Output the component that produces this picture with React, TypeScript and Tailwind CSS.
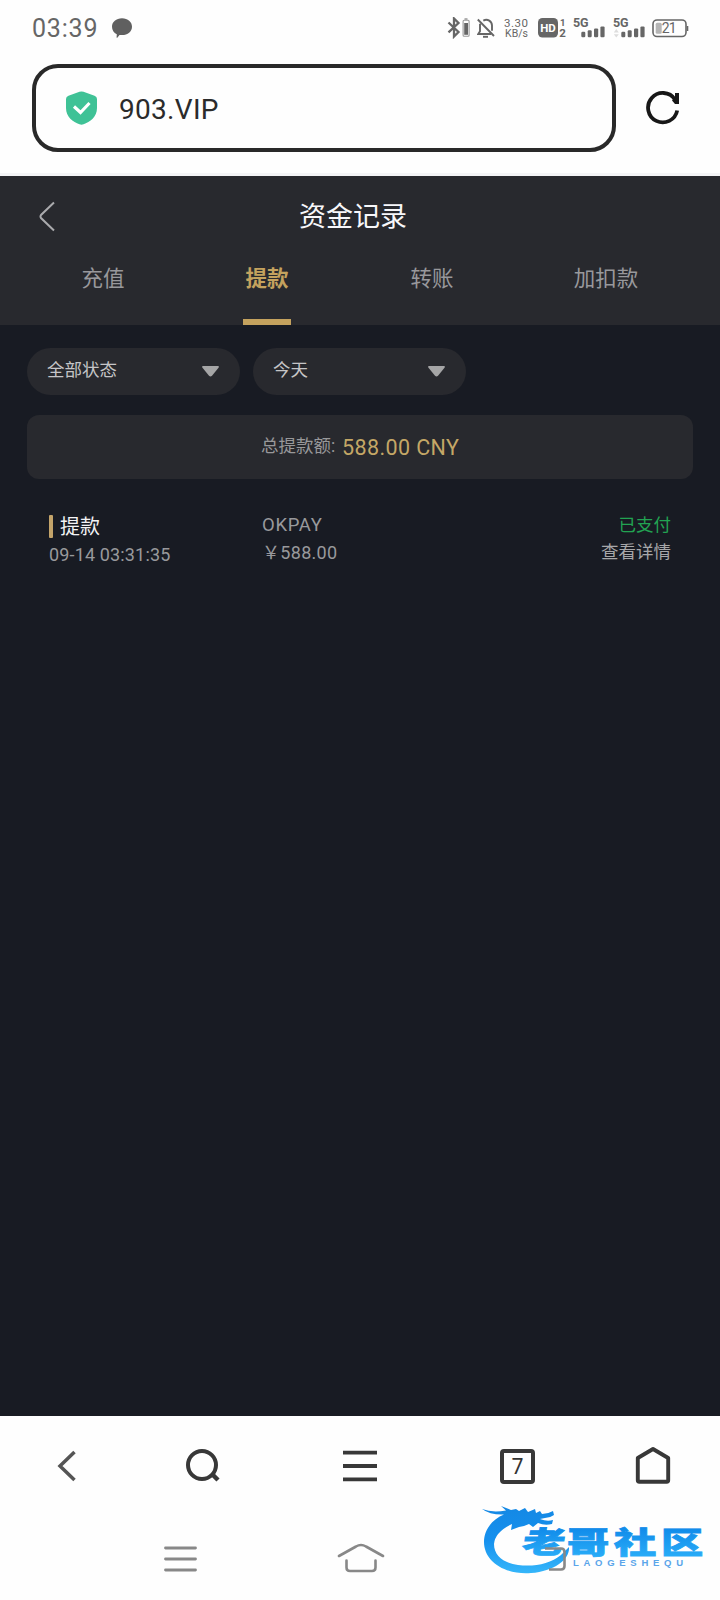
import type { ReactNode } from 'react';

const latin = "font-['Roboto','Noto_Sans_CJK_SC',sans-serif]";

function SignalBars({ second = false }: { second?: boolean }) {
  return (
    <svg className="overflow-visible" width="32" height="22" viewBox="0 0 32 22" fill="#666">
      <text x="0" y="10" fontSize="12.500" fontWeight="700" fontFamily="Roboto, sans-serif" textLength="15.500">5G</text>
      {second && <path d="M0.8 15.5 3.3 12l2.5 3.5zM0.8 17.3h5L3.3 20.6z" fill="#ddd" />}
      <rect x="8.3" y="14.800" width="4" height="5.500" rx="1.200" />
      <rect x="14.700" y="13.300" width="4" height="7" rx="1.200" />
      <rect x="21" y="11.400" width="4.200" height="8.900" rx="1.200" />
      <rect x="27.400" y="9.400" width="4.200" height="10.900" rx="1.200" />
    </svg>
  );
}

function StatusBar() {
  return (
    <div className="flex h-14 items-center pl-[32px] text-[#666]">
      <span className="w-[68px] whitespace-nowrap text-[25px] leading-none tracking-[0.8px]">03:39</span>
      <svg className="ml-3" width="20" height="20" viewBox="0 0 20 20" fill="#606060">
        <path d="M10 .3c5.800 0 10 3.700 10 8.400s-4.200 8.400-10 8.400c-1 0-1.800 0-2.500-.2L5.300 19.700c-.4.3-.8 0-.7-.5l.2-3C1.800 14.700 0 11.900 0 8.700 0 4 4.200.3 10 .3z" />
      </svg>
      <svg className="ml-[315px] shrink-0" width="24" height="22" viewBox="0 0 24 22" fill="none" stroke="#666" strokeWidth="2.300">
        <path d="M1.500 5.500 11.500 15 7 19.500V1.500L11.500 6 1.500 15.300" />
        <rect x="16.100" y="3.300" width="6" height="16" rx="1" stroke="#999" strokeWidth="1.100" />
        <path d="M17.500 2h3" stroke="#999" strokeWidth="1.500" />
        <path d="M19.100 6v11.800" strokeWidth="3.800" />
      </svg>
      <svg className="ml-[6px] shrink-0" width="18" height="22" viewBox="0 0 18 22" fill="none" stroke="#666" strokeWidth="1.900">
        <path d="M.8 2.500 17 19M3 6.700v7.600L1.300 17H14M6.300 3.600C10.500 1.400 15 4.200 15 8.500v5.300" />
        <path d="M6 19.800h5" />
      </svg>
      <svg className="ml-[8px] shrink-0" width="26" height="22" viewBox="0 0 26 22" fill="#666" fontFamily="Roboto, sans-serif">
        <text x="1" y="9.800" fontSize="11.500" textLength="24">3.30</text>
        <text x="2" y="20.300" fontSize="10.500" textLength="23">KB/s</text>
      </svg>
      <svg className="ml-[9px] shrink-0" width="29" height="22" viewBox="0 0 29 22" fontFamily="Roboto, sans-serif" fontWeight="700">
        <rect x="0" y="1" width="20" height="19.500" rx="4.500" fill="#666" />
        <text x="2.300" y="15" fontSize="11.500" fill="#fff" textLength="15.500">HD</text>
        <text x="22" y="8.500" fontSize="9.500" fill="#666">1</text>
        <text x="21.300" y="20" fontSize="11.500" fill="#666">2</text>
      </svg>
      <div className="ml-[6px] shrink-0"><SignalBars /></div>
      <div className="ml-[8px] shrink-0"><SignalBars second /></div>
      <svg className="ml-[7px] shrink-0" width="38" height="20" viewBox="0 0 38 20">
        <rect x="1" y="2" width="33" height="16.500" rx="4" fill="none" stroke="#666" strokeWidth="1.600" />
        <path d="M35.500 8v5" stroke="#666" strokeWidth="1.600" />
        <rect x="3.700" y="4.800" width="6" height="11" rx="1.500" fill="#b5b5b5" />
        <text x="9.700" y="15.300" fontSize="14" fill="#666" fontFamily="Roboto, sans-serif" textLength="15">21</text>
      </svg>
    </div>
  );
}

function AddressBar() {
  return (
    <div className="flex h-[120px] items-start border-b-[3px] border-[#f4f4f6] pt-2 pl-8">
      <div className="flex h-[88px] w-[584px] items-center rounded-[26px] border-4 border-[#292929] pl-[30px]">
        <svg width="31" height="34" viewBox="0 0 31 34">
          <path d="M13.500.8q2-.8 4 0l11 4Q31 5.800 31 8v9c0 9-7 14-13.500 16.300q-2 .7-4 0C7 31 0 26 0 17V8q0-2.200 2.500-3.200z" fill="#3fc296" />
          <path d="m8 15.500 6.500 6 9-9.500" fill="none" stroke="#fff" strokeWidth="3.100" />
        </svg>
        <span className="ml-[22px] translate-y-[2px] text-[28px] leading-none tracking-[0.3px] text-[#2b2b2b]">903.VIP</span>
      </div>
      <svg className="mt-[27px] ml-[30px]" width="34" height="34" viewBox="0 0 34 34" fill="none" stroke="#171717" strokeWidth="3.800">
        <path d="M31.200 19.500A14.700 14.700 0 1 1 29 8.500" />
        <path d="M29 2h4V13h-4L26 9.500 29 6z" fill="#171717" stroke="none" />
      </svg>
    </div>
  );
}

const tabs = [
  { label: '充值', place: 'ml-[79px] w-12' },
  { label: '提款', place: 'ml-[116px] w-12', active: true },
  { label: '转账', place: 'ml-[117px] w-12' },
  { label: '加扣款', place: 'ml-[115px] w-[70px]' },
];

function RecordHeader() {
  return (
    <header className="h-[149px] bg-[#28292e]">
      <div className="flex h-[80px] items-center pl-[39px]">
        <svg width="16" height="31" viewBox="0 0 16 31" fill="none" stroke="#aaaaad" strokeWidth="2">
          <path d="M15 1.500 2 14q-1 1.500 0 3l13 12.500" />
        </svg>
        <h1 className="ml-[244px] translate-y-[1px] text-[27px] leading-none text-[#f7f7fa]">资金记录</h1>
      </div>
      <nav className="flex h-[69px]">
        {tabs.map((t) => (
          <div key={t.label} className={`${t.place} flex flex-col items-center justify-between whitespace-nowrap text-[21.500px] leading-[46px] ${t.active ? 'font-bold text-[#c4a25e]' : 'text-[#98989c]'}`}>
            <span>{t.label}</span>
            {t.active && <i className="h-[6px] w-12 bg-[#c4a25e]" />}
          </div>
        ))}
      </nav>
    </header>
  );
}

function Filter({ children }: { children: ReactNode }) {
  return (
    <div className="flex h-[47px] w-[213px] items-center justify-between rounded-full bg-[#28292e] pr-[21px] pl-[20px] text-[17.500px] leading-none text-[#c5c5c7]">
      <span className="-translate-y-[1px]">{children}</span>
      <svg width="17" height="11" viewBox="0 0 17 11" fill="#a5a5a6">
        <path d="M1 0h15q1.500.3.500 1.700L10 9.800q-1.500 1.600-3 0L.5 1.700Q-.5.300 1 0z" />
      </svg>
    </div>
  );
}

function Records() {
  return (
    <main className="h-[1091px] bg-[#181b23] px-[27px] pt-[23px]">
      <div className="flex gap-[13px]">
        <Filter>全部状态</Filter>
        <Filter>今天</Filter>
      </div>
      <div className="mt-5 flex h-16 items-center rounded-xl bg-[#28292e] pl-[234px] leading-none text-[#98989a]">
        <span className="w-[81px] text-[17.500px]">总提款额:</span>
        <span className="translate-y-[1px] text-[21.500px] tracking-[0.4px] text-[#c4a766]">588.00 CNY</span>
      </div>
      <div className="flex pt-[33px] pr-[22px] pl-[22px] text-[17.500px] leading-[27px] text-[#98999c]">
        <div className="w-[213px] pt-[1px]">
          <div className="flex items-center gap-[7px] text-[20px] text-[#f3f3f5]">
            <i className="h-[23px] w-1 rounded-[1px] bg-[#c3a46a]" />
            <span className="translate-y-[1px]">提款</span>
          </div>
          <div className="translate-y-[1px] text-[18px] tracking-[0.150px]">09-14 03:31:35</div>
        </div>
        <div className="flex-1">
          <div className="text-[18.500px] tracking-[0.7px]">OKPAY</div>
          <div className="text-[18px] tracking-[0.3px]">￥588.00</div>
        </div>
        <div className="text-right">
          <div className="text-[#22a352]">已支付</div>
          <div className="text-[#a7a7a9]">查看详情</div>
        </div>
      </div>
    </main>
  );
}

function BrowserToolbar() {
  return (
    <div className="flex h-[98px] items-center pt-[2px]">
      <svg className="ml-[57px]" width="20" height="32" viewBox="0 0 20 32" fill="none" stroke="#555" strokeWidth="3.500">
        <path d="M17.500 2 3 16l14.500 14" />
      </svg>
      <svg className="ml-[108px]" width="36" height="34" viewBox="0 0 36 34" fill="none" stroke="#383838" strokeWidth="4">
        <circle cx="17" cy="16" r="14" />
        <path d="m27 25 6 6" strokeWidth="4.500" />
      </svg>
      <svg className="ml-[122px]" width="34" height="32" viewBox="0 0 34 32" stroke="#383838" strokeWidth="3.800">
        <path d="M0 2.700h34M0 16h34M0 29.300h34" />
      </svg>
      <div className="ml-[123px] flex h-[35px] w-[35px] items-center justify-center rounded-[4px] border-4 border-[#383838] font-['Noto_Sans',sans-serif] text-[21px] leading-none text-[#333]">7</div>
      <svg className="-mt-[3px] ml-[100px]" width="36" height="38" viewBox="0 0 36 38" fill="none" stroke="#383838" strokeWidth="3.900" strokeLinejoin="round">
        <path d="m18 3 15.200 9V34.300q0 1.500-1.500 1.500H4.300q-1.500 0-1.500-1.500V12z" />
      </svg>
    </div>
  );
}

function SystemNav() {
  return (
    <div className="flex h-[86px] items-center pt-[3px]">
      <svg className="ml-[164px]" width="33" height="26" viewBox="0 0 33 26" stroke="#888" strokeWidth="2.800" strokeLinecap="round">
        <path d="M1.500 2h30M1.500 13h30M1.500 24h30" />
      </svg>
      <svg className="-mt-[1px] ml-[140px]" width="48" height="30" viewBox="0 0 48 30" fill="none" stroke="#888" strokeWidth="2.600" strokeLinecap="round">
        <path d="M2 13 19 3.500q5-3 10 0l17 9.500M9.500 17.500v7q0 3.500 3.500 3.500h22q3.500 0 3.500-3.500v-7" />
      </svg>
      <svg className="relative z-10 ml-[147px]" width="34" height="24" viewBox="0 0 34 24" fill="none" stroke="#888" strokeWidth="2.600">
        <path d="M13 1.500h16q3.500 0 3.500 3.500v14q0 3.500-3.500 3.500H17" />
      </svg>
    </div>
  );
}

const glyphs = [
  { char: '老', x: 41 },
  { char: '哥', x: 87 },
  { char: '社', x: 134 },
  { char: '区', x: 181 },
];

function CommunityLogo() {
  return (
    <svg className="absolute top-[1500px] left-[480px]" width="228" height="78" viewBox="0 0 228 78">
      <defs>
        <linearGradient id="ring" x1="0" y1="0" x2="0" y2="1">
          <stop offset="0" stopColor="#1488e4" />
          <stop offset=".5" stopColor="#1590ee" />
          <stop offset="1" stopColor="#35b6fa" />
        </linearGradient>
        <linearGradient id="letters" x1="0" y1="0" x2="0" y2="1">
          <stop offset="0" stopColor="#087fe5" />
          <stop offset="1" stopColor="#2db2fa" />
        </linearGradient>
      </defs>
      <path fill="url(#ring)" d="M2 9Q12 13 26 10.500L21 6l10 4 5-1 3 2 6-3 3 4 7-3 1 4 4-2 2 3Q68 14 73 11l1 4q-4 3-9 3l-5 1q7 3 13 1l-1 4q-7 2-14-1l-5 4-4-3-5 2-5 1-8 3 1-6Q15 32 14 44c0 12 10 19 24 21 16 2 32-1 43-10l8-8C90 59 75 71 51 73 24 75 4 61 4 42 4 29 13 19 24 14.500Q10 15 2 9z" />
      <g fill="url(#letters)" fontFamily="'Noto Sans CJK SC', sans-serif" fontWeight="900" stroke="url(#letters)" strokeWidth=".8">
        {glyphs.map((g, i) => (
          <text key={g.char} fontSize="30" transform={`translate(${g.x} 53) scale(1.410 1)${i === 0 ? ' skewX(-7)' : ''}`}>{g.char}</text>
        ))}
      </g>
      <text x="93" y="66" fontSize="9.500" fontWeight="700" fontFamily="Liberation Sans, sans-serif" fill="#5aa5ea" textLength="110">LAOGESHEQU</text>
    </svg>
  );
}

export default function App() {
  return (
    <div className={`relative h-[1600px] w-[720px] overflow-hidden bg-[#fefefe] ${latin}`}>
      <StatusBar />
      <AddressBar />
      <RecordHeader />
      <Records />
      <BrowserToolbar />
      <SystemNav />
      <CommunityLogo />
    </div>
  );
}
